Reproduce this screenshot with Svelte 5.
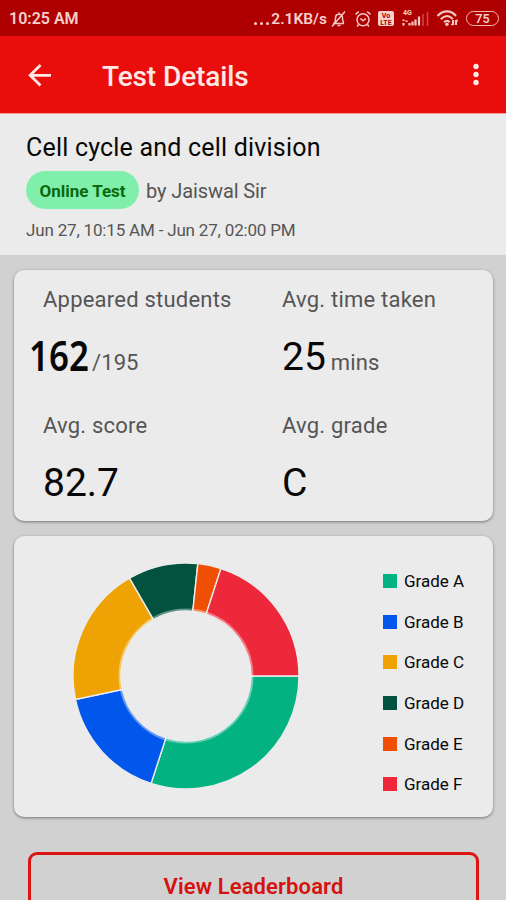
<script>
  const stats = [
    { label: "Appeared students", value: "162", unit: "/195", heavy: true },
    { label: "Avg. time taken", value: "25", unit: "mins" },
    { label: "Avg. score", value: "82.7" },
    { label: "Avg. grade", value: "C" }
  ];

  const grades = [
    { name: "Grade A", count: 9, color: "#03b283" },
    { name: "Grade B", count: 5, color: "#0157ec" },
    { name: "Grade C", count: 6, color: "#eea203" },
    { name: "Grade D", count: 3, color: "#02523f" },
    { name: "Grade E", count: 1, color: "#f05003" },
    { name: "Grade F", count: 6, color: "#ec283a" }
  ];

  const size = 226;
  const mid = size / 2;
  const outer = 113;
  const inner = 65;
  const total = grades.reduce((sum, g) => sum + g.count, 0);

  function point(angle, radius) {
    return `${mid + radius * Math.cos(angle)} ${mid + radius * Math.sin(angle)}`;
  }

  // slices go clockwise starting from 3 o'clock
  let angle = 0;
  const slices = grades.map(g => {
    const start = angle;
    angle += (g.count / total) * Math.PI * 2;
    return {
      color: g.color,
      d: `M${point(start, outer)} A${outer} ${outer} 0 0 1 ${point(angle, outer)} L${point(angle, inner)} A${inner} ${inner} 0 0 0 ${point(start, inner)} Z`
    };
  });
</script>

<div class="screen">
  <div class="status">
    <span class="time">10:25 AM</span>
    <span class="dots"><i></i><i></i><i></i></span>
    <span class="speed">2.1KB/s</span>
    <svg class="bell" width="17" height="18" viewBox="0 0 17 18">
      <path d="M3 13.5h11M4.5 13c1-1.500 1-3 1-5 0-2 1.200-3.700 3.500-3.700S12.500 6 12.500 8c0 2 .2 3.500 1.300 5M7.500 15.500h3M9 2.500v1.500M2 16.500L15 1.500" />
    </svg>
    <svg class="alarm" width="18" height="18" viewBox="0 0 18 18">
      <circle cx="9" cy="9.700" r="6" />
      <path d="M1.500 4.300L4.800 1.700M16.500 4.300L13.200 1.700M6.300 8.500L9 10.700l3-2.200M4.500 14.500L3.200 16.500M13.500 14.500l1.300 2" />
    </svg>
    <svg class="volte" width="16" height="15" viewBox="0 0 16 15">
      <rect x="0" y="0" width="16" height="15" rx="2" />
      <text x="8" y="7">Vo</text>
      <text x="8" y="13.500">LTE</text>
    </svg>
    <svg class="signal" width="27" height="19" viewBox="0 0 27 19">
      <text x="1" y="6">4G</text>
      <path d="M1.500 10.500v1.500M1.500 14v2.500M4.500 11.500v1.500M7.500 14V16.500M10.500 12.500V16.500M13.500 10.500V16.500M17 7.500V16.500" />
      <path class="faint" d="M21 5v12M25.500 3v14" />
    </svg>
    <svg class="wifi" width="23" height="17" viewBox="0 0 23 17">
      <path d="M1.500 6C7-.2 15-.2 20 6M4.800 9.200c4-4.300 8.400-4.300 12 0M8 12.200c2-2 4-2 5.700 0M17 10v5M15.500 13.500l1.500 1.500M20 15V10M20 10l1.500 1.500" />
      <circle cx="10.900" cy="14.200" r="1.700" />
    </svg>
    <span class="battery">75</span>
  </div>

  <header class="bar">
    <svg width="24" height="24" viewBox="0 0 24 24">
      <path d="M23 12.300H2.500M12.500 2L2.200 12.300l10.300 10.200" />
    </svg>
    <h1>Test Details</h1>
    <svg class="more" width="8" height="24" viewBox="0 0 8 24">
      <circle cx="4" cy="3.500" r="2.700" />
      <circle cx="4" cy="11.500" r="2.700" />
      <circle cx="4" cy="19.500" r="2.700" />
    </svg>
  </header>

  <section class="info">
    <h2>Cell cycle and cell division</h2>
    <div class="by">
      <span class="chip">Online Test</span>
      <span class="author">by Jaiswal Sir</span>
    </div>
    <p>Jun 27, 10:15 AM - Jun 27, 02:00 PM</p>
  </section>

  <main>
    <section class="card stats">
      {#each stats as stat}
        <div class="stat">
          <span class="label">{stat.label}</span>
          <div class="figure" class:heavy={stat.heavy}>
            <span class="value">{stat.value}</span>
            {#if stat.unit}
              <span class="unit">{stat.unit}</span>
            {/if}
          </div>
        </div>
      {/each}
    </section>

    <section class="card chart">
      <svg width={size} height={size} viewBox="0 0 {size} {size}">
        {#each slices as slice}
          <path d={slice.d} fill={slice.color} />
        {/each}
        <circle cx={mid} cy={mid} r="66.300" />
      </svg>
      <ul>
        {#each grades as grade}
          <li>
            <i style="background:{grade.color}"></i>
            <span>{grade.name}</span>
          </li>
        {/each}
      </ul>
    </section>

    <button>View Leaderboard</button>
  </main>
</div>

<style>
  :global(body) {
    overflow: hidden;
  }
  .screen {
    width: 506px;
    height: 900px;
    overflow: hidden;
    display: flex;
    flex-direction: column;
    background: #d1d1d1;
    font-family: Roboto, "Liberation Sans", sans-serif;
    color: #080808;
  }
  h1,
  h2,
  p,
  ul {
    margin: 0;
    padding: 0;
    font-weight: 400;
    white-space: nowrap;
  }
  .status {
    flex: none;
    height: 36px;
    box-sizing: border-box;
    display: flex;
    align-items: center;
    padding: 1px 7px 0 9px;
    background: #ae0000;
    color: #f6d0cb;
    font-size: 16px;
    font-weight: 600;
  }
  .time {
    flex: 1;
  }
  .dots {
    display: flex;
    gap: 3px;
    margin: 10px 2px 0 0;
  }
  .dots i {
    width: 3px;
    height: 3px;
    border-radius: 50%;
    background: #f6d0cb;
  }
  .speed {
    font-size: 15.5px;
  }
  .status svg {
    fill: none;
    stroke: #f6c8c3;
    stroke-width: 1.5;
  }
  .status .bell {
    margin-left: 3px;
  }
  .status .alarm {
    margin-left: 7px;
  }
  .status .volte {
    margin-left: 6px;
    fill: #f6d0cb;
    stroke: none;
  }
  .volte text {
    fill: #ae0000;
    font-size: 7px;
    font-weight: 700;
    text-anchor: middle;
  }
  .status .signal {
    margin-left: 8px;
    stroke-width: 2.2;
  }
  .signal text {
    fill: #f6d0cb;
    stroke: none;
    font-size: 7px;
    font-weight: 700;
  }
  .signal .faint {
    stroke: #d04a48;
    stroke-width: 1.5;
  }
  .status .wifi {
    margin-left: 7px;
    stroke-width: 2.1;
  }
  .wifi circle {
    fill: #f6d0cb;
    stroke: none;
  }
  .battery {
    width: 33px;
    height: 15px;
    box-sizing: border-box;
    margin-left: 7px;
    border: 1.5px solid #f6b8b3;
    border-radius: 8px;
    text-align: center;
    font-size: 12.5px;
    line-height: 13px;
  }
  .bar {
    flex: none;
    height: 78px;
    box-sizing: border-box;
    display: flex;
    align-items: center;
    padding: 0 26px 0 28px;
    background: #e90d0b;
    border-bottom: 1px solid #f39a98;
  }
  .bar svg {
    fill: none;
    stroke: #ffe9e7;
    stroke-width: 2.8;
  }
  .bar .more {
    fill: #ffe9e7;
    stroke: none;
  }
  .bar h1 {
    flex: 1;
    margin-left: 50px;
    padding-top: 3px;
    color: #ffe9e7;
    font-size: 28px;
    font-weight: 500;
    letter-spacing: -0.1px;
  }
  .info {
    flex: none;
    height: 141px;
    box-sizing: border-box;
    padding: 19px 26px 0;
    background: #ebebeb;
  }
  .info h2 {
    font-size: 25px;
    letter-spacing: 0.2px;
    line-height: 30px;
  }
  .by {
    display: flex;
    align-items: center;
    margin-top: 8px;
  }
  .chip {
    width: 113px;
    height: 38px;
    border-radius: 19px;
    background: #80efac;
    color: #096a09;
    font-size: 17px;
    font-weight: 700;
    line-height: 40px;
    text-align: center;
  }
  .author {
    margin-left: 7px;
    padding-top: 2px;
    color: #555;
    font-size: 20px;
    letter-spacing: -0.1px;
  }
  .info p {
    margin-top: 11px;
    color: #555;
    font-size: 17px;
    letter-spacing: -0.18px;
    line-height: 20px;
  }
  main {
    padding: 15px 13px 0 14px;
  }
  .card {
    box-sizing: border-box;
    border-radius: 10px;
    background: #ebebeb;
    box-shadow: 0 1px 3px rgba(0, 0, 0, 0.45);
  }
  .stats {
    height: 251px;
    display: grid;
    grid-template-columns: 239px 1fr;
    grid-template-rows: 126px 1fr;
    padding: 17px 0 0 29px;
  }
  .stat {
    white-space: nowrap;
  }
  .label {
    display: block;
    color: #555;
    font-size: 22px;
    letter-spacing: 0.22px;
    line-height: 26px;
  }
  .figure {
    display: flex;
    align-items: baseline;
    height: 50px;
    margin-top: 19px;
  }
  .value {
    font-size: 39px;
    line-height: 50px;
  }
  .unit {
    margin-left: 5px;
    color: #555;
    font-size: 22px;
    letter-spacing: 0.1px;
  }
  .heavy {
    margin-top: 17px;
    margin-left: -14px;
  }
  .heavy .value {
    width: 62px;
    font-family: "Noto Sans", sans-serif;
    font-size: 42px;
    font-weight: 600;
    transform: scaleX(0.83);
    transform-origin: left;
  }
  .heavy .unit {
    margin-left: 1px;
    transform: translateY(-1px);
  }
  .chart {
    height: 281px;
    display: flex;
    margin-top: 15px;
    padding: 27px 0 0 59px;
  }
  .chart path {
    stroke: #ebebeb;
    stroke-width: 1.4;
  }
  .chart circle {
    fill: none;
    stroke: #fff;
    stroke-opacity: 0.38;
    stroke-width: 2.4;
  }
  .chart ul {
    margin: -2px 0 0 84px;
    list-style: none;
  }
  .chart li {
    display: flex;
    align-items: center;
    height: 40.6px;
    font-size: 17px;
  }
  .chart i {
    width: 14px;
    height: 14px;
    margin-right: 7px;
  }
  button {
    display: block;
    width: 451px;
    height: 68px;
    margin: 35px 0 0 14px;
    padding: 0;
    border: 3px solid #dc1512;
    border-radius: 9px;
    background: none;
    color: #d5120f;
    font-family: inherit;
    font-size: 22px;
    font-weight: 600;
    letter-spacing: 0.12px;
  }
</style>
